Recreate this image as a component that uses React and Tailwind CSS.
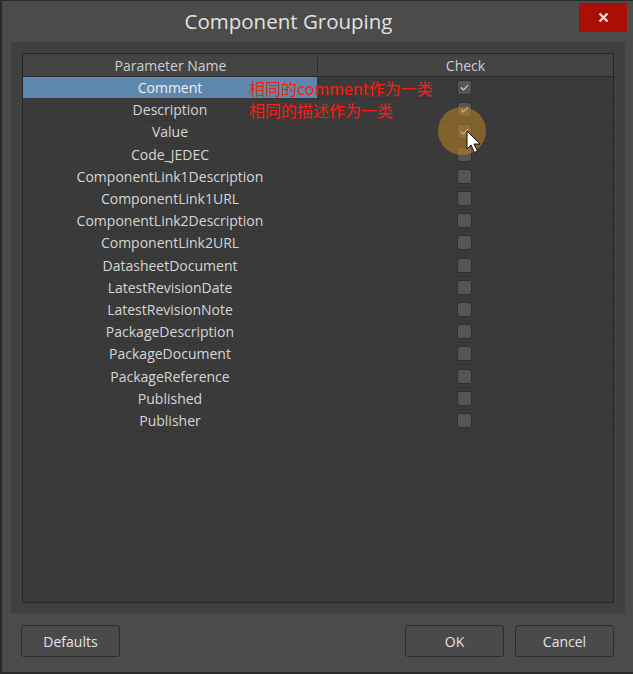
import React from "react";

const params = [
  "Comment",
  "Description",
  "Value",
  "Code_JEDEC",
  "ComponentLink1Description",
  "ComponentLink1URL",
  "ComponentLink2Description",
  "ComponentLink2URL",
  "DatasheetDocument",
  "LatestRevisionDate",
  "LatestRevisionNote",
  "PackageDescription",
  "PackageDocument",
  "PackageReference",
  "Published",
  "Publisher",
];

const checked = ["Comment", "Description", "Value"];

const CheckBox = ({ on }) => (
  <div className="w-[15px] h-[15px] rounded-[3px] bg-[#555555] border border-[#2f2f2f] flex items-center justify-center">
    {on && (
      <svg width="9" height="7" viewBox="0 0 9 7" fill="none">
        <path d="M1 3.5 L3.5 5.8 L8 1.2" stroke="#d0d0d0" strokeWidth="1.2" />
      </svg>
    )}
  </div>
);

const Button = ({ children, className }) => (
  <button
    className={
      "h-[32px] rounded-[3px] border border-[#2c2c2c] bg-[#4a4a4a] text-[14px] text-[#e4e4e4] " +
      className
    }
  >
    {children}
  </button>
);

const App = () => {
  return (
    <div
      className="w-[633px] h-[674px] bg-[#4b4b4b] border-l-2 border-b-2 border-t border-[#2a2a2a] flex flex-col relative"
      style={{ fontFamily: '"Open Sans", "Noto Sans", sans-serif' }}
    >
      {/* title bar */}
      <div className="h-[41px] relative flex items-center justify-center pr-[58px]">
        <span className="text-[20.5px] text-[#e2e2e2]">Component Grouping</span>
        <div className="absolute right-[6px] top-[2px] w-[48px] h-[29px] bg-[#a90f05] flex items-center justify-center">
          <svg width="11" height="11" viewBox="0 0 11 11">
            <path d="M1.5 1.5 L9.5 9.5 M9.5 1.5 L1.5 9.5" stroke="#f4e0e0" strokeWidth="2.2" />
          </svg>
        </div>
      </div>

      {/* content panel */}
      <div className="ml-[9px] mr-[8px] h-[571px] bg-[#404040] pt-[11px] pl-[11px] pr-[11px] pb-[10px] flex">
        <div className="flex-1 border border-[#262626] bg-[#3a3a3a] flex flex-col relative">
          {/* header */}
          <div className="h-[23px] bg-[#444444] border-b border-[#2b2b2b] flex text-[14px] text-[#cfcfcf]">
            <div className="w-[295px] flex items-center justify-center relative">
              Parameter Name
              <div className="absolute right-0 top-[3px] w-[1px] h-[16px] bg-[#2a2a2a]" />
            </div>
            <div className="flex-1 flex items-center justify-center">Check</div>
          </div>

          {/* rows */}
          <div className="flex flex-col">
            {params.map((p, i) => (
              <div key={p} className="h-[22.2px] flex border-b border-[#353535] text-[14px]">
                <div
                  className={
                    "w-[295px] flex items-center justify-center border-r border-[#363636] " +
                    (i === 0 ? "bg-[#5e87ae] text-[#eeeeee]" : "text-[#d6d6d6]")
                  }
                >
                  {p}
                </div>
                <div className="flex-1 flex items-center justify-center pr-[2px]">
                  <CheckBox on={checked.includes(p)} />
                </div>
              </div>
            ))}
          </div>

          {/* red annotations */}
          <div
            className="absolute left-[226px] top-[23px] text-[16px] leading-[22px] text-[#ff1a12]"
            style={{ fontFamily: '"Noto Sans CJK SC", "Noto Sans", sans-serif' }}
          >
            <div>相同的comment作为一类</div>
            <div>相同的描述作为一类</div>
          </div>

          {/* click highlight + cursor */}
          <div className="absolute left-[415px] top-[53px] w-[48px] h-[48px] rounded-full bg-[#c88a1e]/50" />
          <svg className="absolute left-[443px] top-[76px]" width="17" height="26" viewBox="0 0 17 26">
            <path
              d="M1 1 L1 19 L5 15 L8.5 22.5 L11.5 21 L8 14 L14 14 Z"
              fill="#ffffff"
              stroke="#111111"
              strokeWidth="1"
              strokeLinejoin="round"
            />
          </svg>
        </div>
      </div>

      {/* footer */}
      <div className="flex-1 flex items-start pt-[12px] px-[19px]">
        <Button className="w-[99px]">Defaults</Button>
        <div className="flex-1" />
        <Button className="w-[99px] mr-[11px]">OK</Button>
        <Button className="w-[99px]">Cancel</Button>
      </div>
    </div>
  );
};

export default App;
